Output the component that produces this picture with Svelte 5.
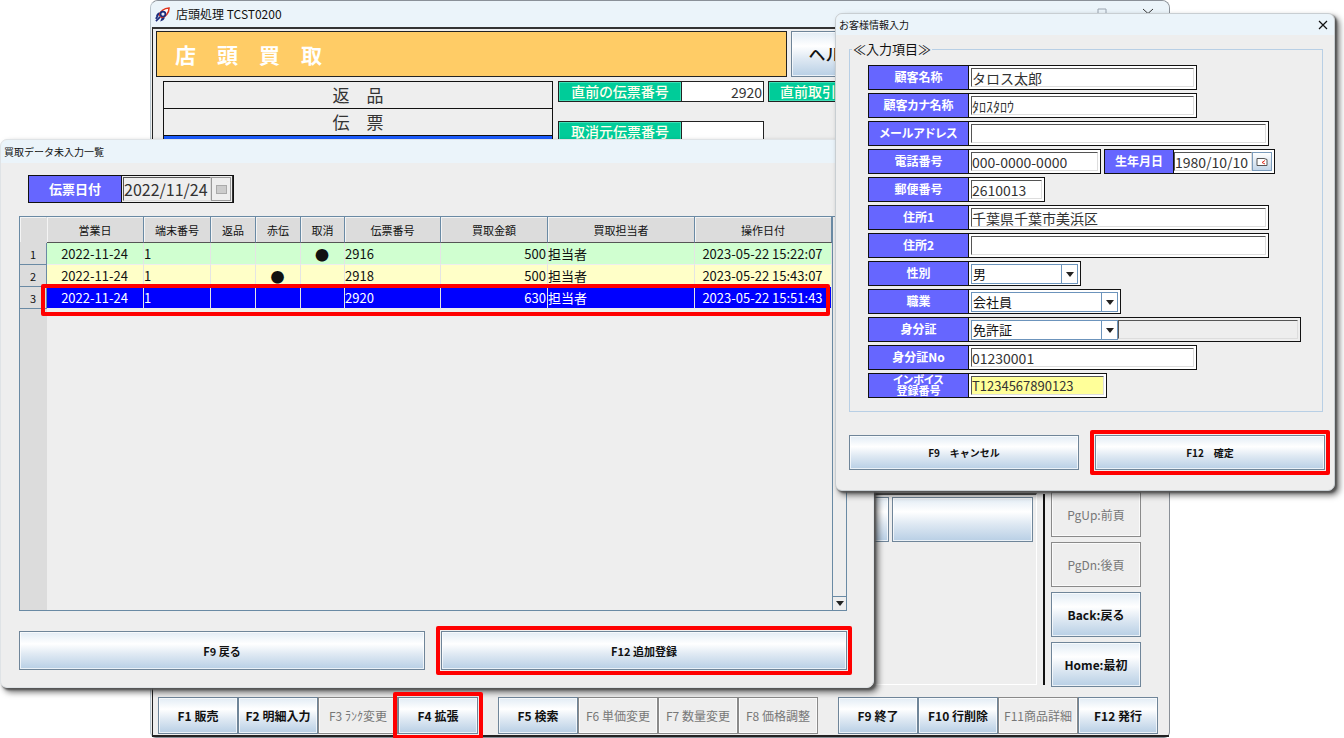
<script lang="ts">
  interface FnKey {
    label: string;
    disabled?: boolean;
    marked?: boolean;
  }

  interface Field {
    id: string;
    label: string;
    kind: 'text' | 'tel' | 'select' | 'idtype';
    value: string;
    size: string;
  }

  const fnGroups: FnKey[][] = [
    [
      { label: 'F1 販売' },
      { label: 'F2 明細入力' },
      { label: 'F3 ﾗﾝｸ変更', disabled: true },
      { label: 'F4 拡張', marked: true }
    ],
    [
      { label: 'F5 検索' },
      { label: 'F6 単価変更', disabled: true },
      { label: 'F7 数量変更', disabled: true },
      { label: 'F8 価格調整', disabled: true }
    ],
    [
      { label: 'F9 終了' },
      { label: 'F10 行削除' },
      { label: 'F11商品詳細', disabled: true },
      { label: 'F12 発行' }
    ]
  ];

  const pageKeys: FnKey[] = [
    { label: 'PgUp:前頁', disabled: true },
    { label: 'PgDn:後頁', disabled: true },
    { label: 'Back:戻る' },
    { label: 'Home:最初' }
  ];

  const columns = ['営業日', '端末番号', '返品', '赤伝', '取消', '伝票番号', '買取金額', '買取担当者', '操作日付'];

  const slips = [
    { date: '2022-11-24', term: '1', red: '', cancel: '●', no: '2916', price: 500, staff: '担当者', at: '2023-05-22 15:22:07', tone: 'green' },
    { date: '2022-11-24', term: '1', red: '●', cancel: '', no: '2918', price: 500, staff: '担当者', at: '2023-05-22 15:43:07', tone: 'yellow' },
    { date: '2022-11-24', term: '1', red: '', cancel: '', no: '2920', price: 630, staff: '担当者', at: '2023-05-22 15:51:43', tone: 'selected' }
  ];

  const fields: Field[] = [
    { id: 'name', label: '顧客名称', kind: 'text', value: 'タロス太郎', size: 'm' },
    { id: 'kana', label: '顧客カナ名称', kind: 'text', value: 'ﾀﾛｽﾀﾛｳ', size: 'm' },
    { id: 'mail', label: 'メールアドレス', kind: 'text', value: '', size: 'l' },
    { id: 'tel', label: '電話番号', kind: 'tel', value: '000-0000-0000', size: 's' },
    { id: 'zip', label: '郵便番号', kind: 'text', value: '2610013', size: 'xs' },
    { id: 'addr1', label: '住所1', kind: 'text', value: '千葉県千葉市美浜区', size: 'l' },
    { id: 'addr2', label: '住所2', kind: 'text', value: '', size: 'l' },
    { id: 'sex', label: '性別', kind: 'select', value: '男', size: 'sex' },
    { id: 'job', label: '職業', kind: 'select', value: '会社員', size: 'job' },
    { id: 'idtype', label: '身分証', kind: 'idtype', value: '免許証', size: 'xl' },
    { id: 'idno', label: '身分証No', kind: 'text', value: '01230001', size: 'm' },
    { id: 'invoice', label: 'インボイス\n登録番号', kind: 'text', value: 'T1234567890123', size: 'inv' }
  ];
</script>

<div class="desktop">
  <main class="window shop">
    <header class="titlebar">
      <svg class="rocket" viewBox="0 0 16 16" aria-hidden="true">
        <path d="M4 8 8 3.5Q11 1 15 1q0 4-2.500 7L8 12z" fill="#fff" stroke="#e0321c" stroke-width="1.6" />
        <path d="M5 5.500Q1.500 6 1 10.500L4 9zM10.500 11q-.5 3.500-5 4.500L7 12z" fill="#1c2c7c" />
        <circle cx="8.500" cy="7.500" r="2.600" fill="#e8eefc" stroke="#1c2c7c" stroke-width="1.800" />
        <path d="m5.500 10.500-4.500 4.500M3 9.500 .8 12.500" stroke="#1c2c7c" stroke-width="1.800" />
      </svg>
      <span>店頭処理 TCST0200</span>
      <svg class="controls" viewBox="0 0 60 12" aria-hidden="true">
        <path d="M1 1h8v8H1z" stroke="#9aa4b0" fill="none" />
        <path d="m46 1 10 9m0-9L46 10" stroke="#333" fill="none" />
      </svg>
    </header>

    <div class="shop-body">
      <div class="head">
        <h1>店　頭　買　取</h1>
        <button class="btn help" type="button">ヘルプ</button>
      </div>

      <div class="info">
        <ul class="kinds">
          <li>返　品</li>
          <li>伝　票</li>
          <li class="active"></li>
        </ul>
        <div class="refs">
          <div class="ref">
            <label for="last-no">直前の伝票番号</label>
            <input id="last-no" value="2920" readonly />
            <span class="ref-next">直前取引</span>
          </div>
          <div class="ref">
            <label for="cancel-no">取消元伝票番号</label>
            <input id="cancel-no" readonly />
          </div>
        </div>
      </div>

      <div class="lower">
        <div class="panel">
          <button class="btn slot" type="button"></button>
          <button class="btn slot" type="button"></button>
        </div>
        <div class="divider"></div>
        <div class="page-keys">
          {#each pageKeys as key}
            <button class="btn" type="button" disabled={key.disabled}>{key.label}</button>
          {/each}
        </div>
      </div>

      <nav class="fn-bar">
        {#each fnGroups as group}
          <div class="fn-group">
            {#each group as key}
              <button class="btn" class:marked={key.marked} type="button" disabled={key.disabled}>{key.label}</button>
            {/each}
          </div>
        {/each}
      </nav>
    </div>
  </main>

  <section class="window slips">
    <header class="titlebar small">買取データ未入力一覧</header>
    <div class="slips-body">
      <div class="date">
        <label for="slip-date">伝票日付</label>
        <div class="box">
          <input id="slip-date" value="2022/11/24" readonly />
          <button class="cal off" type="button" disabled aria-label="日付選択"><i></i></button>
        </div>
      </div>

      <div class="grid">
        <div class="sheet">
          <table>
            <colgroup>
              <col class="c-num" /><col class="c-date" /><col class="c-term" /><col class="c-flag" /><col class="c-flag" />
              <col class="c-cancel" /><col class="c-no" /><col class="c-price" /><col class="c-staff" /><col />
            </colgroup>
            <thead>
              <tr>
                <th></th>
                {#each columns as col}
                  <th>{col}</th>
                {/each}
              </tr>
            </thead>
            <tbody>
              {#each slips as slip, i}
                <tr class={slip.tone}>
                  <th>{i + 1}</th>
                  <td class="mid">{slip.date}</td>
                  <td>{slip.term}</td>
                  <td></td>
                  <td class="mid dot">{slip.red}</td>
                  <td class="mid dot">{slip.cancel}</td>
                  <td>{slip.no}</td>
                  <td class="num">{slip.price}</td>
                  <td>{slip.staff}</td>
                  <td class="mid">{slip.at}</td>
                </tr>
              {/each}
            </tbody>
          </table>
        </div>
        <div class="scroll">
          <button type="button" aria-label="下へ"><i class="arrow"></i></button>
        </div>
      </div>

      <footer class="actions">
        <button class="btn" type="button">F9 戻る</button>
        <button class="btn marked" type="button">F12 追加登録</button>
      </footer>
    </div>
  </section>

  <section class="window customer">
    <header class="titlebar small">
      <span>お客様情報入力</span>
      <button class="close" type="button" aria-label="閉じる">
        <svg viewBox="0 0 10 10" aria-hidden="true"><path d="m1 1 8 8m0-8L1 9" stroke="#111" stroke-width="1.2" /></svg>
      </button>
    </header>
    <form class="customer-body">
      <fieldset>
        <legend>≪入力項目≫</legend>
        {#each fields as f}
          <div class="row">
            <label for={f.id} class:two={f.id === 'invoice'}>{f.label}</label>
            <div class="box {f.size}">
              {#if f.kind === 'select' || f.kind === 'idtype'}
                <div class="pick">
                  <select id={f.id}><option>{f.value}</option></select>
                  <i class="arrow"></i>
                </div>
                {#if f.kind === 'idtype'}
                  <input class="extra" aria-label="身分証補足" disabled />
                {/if}
              {:else}
                <input id={f.id} value={f.value} />
              {/if}
            </div>
            {#if f.kind === 'tel'}
              <label for="birth" class="birth">生年月日</label>
              <div class="box birthday">
                <input id="birth" value="1980/10/10" />
                <button class="cal" type="button" aria-label="日付選択">
                  <svg viewBox="0 0 12 10" aria-hidden="true">
                    <path d="M1 1.5h7l3 1v6H1z" fill="#fff" stroke="#555" />
                    <path d="M9 3.5 6 5.5l3 1.5" fill="none" stroke="#e03020" />
                  </svg>
                </button>
              </div>
            {/if}
          </div>
        {/each}
      </fieldset>
      <footer class="actions">
        <button class="btn" type="button">F9　キャンセル</button>
        <button class="btn marked" type="button">F12　確定</button>
      </footer>
    </form>
  </section>
</div>

<style>
  :global(body) {
    margin: 0;
    background: #fff;
  }

  .desktop {
    position: relative;
    min-height: 100vh;
    overflow: hidden;
    font-family: "Noto Sans CJK JP", "Liberation Sans", sans-serif;
    font-size: 12px;
    line-height: 16px;
    color: #111;
  }

  .desktop * {
    box-sizing: border-box;
  }

  button,
  input,
  select {
    font: inherit;
    color: inherit;
    margin: 0;
    padding: 0;
    border-radius: 0;
    min-width: 0;
  }

  /* windows */
  .window {
    position: absolute;
    display: flex;
    flex-direction: column;
    background: #eee;
  }

  .shop {
    top: 0;
    bottom: 0;
    left: 150px;
    right: 174px;
    border: 1px solid #8a9098;
    border-left-color: #b8c4cc;
    border-radius: 8px 8px 6px 6px;
  }

  .slips {
    top: 139px;
    bottom: 50px;
    left: 0;
    right: 470px;
    border: 1px solid #dfe3e6;
    border-radius: 7px;
    box-shadow: 2px 2px 2px #555, 4px 4px 6px rgba(0, 0, 0, 0.6);
  }

  .customer {
    top: 13px;
    left: 835px;
    right: 9px;
    border: 1px solid #c8ced2;
    border-radius: 7px;
    box-shadow: 2px 2px 2px #555, 4px 4px 6px rgba(0, 0, 0, 0.6);
  }

  .titlebar {
    display: flex;
    align-items: center;
    gap: 6px;
    height: 26px;
    padding: 0 12px 0 4px;
    background: #ebf4fa;
    border-radius: 7px 7px 0 0;
  }

  .titlebar.small {
    height: 23px;
    padding: 0 6px 0 3px;
    font-size: 10px;
  }

  .customer .titlebar {
    height: 21px;
  }

  .rocket {
    width: 15px;
    height: 15px;
  }

  .controls {
    width: 60px;
    height: 12px;
    margin-left: auto;
  }

  .close {
    display: flex;
    margin-left: auto;
    border: none;
    background: none;
  }

  .close svg {
    width: 10px;
    height: 10px;
  }

  /* buttons */
  .btn {
    position: relative;
    display: block;
    border: 1px solid #6f8599;
    background: linear-gradient(#e2ecf5, #fff 32%, #dfe9f3 60%, #b8cfe5);
    box-shadow: inset 0 0 0 1px rgba(255, 255, 255, 0.7);
    font-weight: bold;
    text-align: center;
    white-space: nowrap;
  }

  .btn:disabled {
    background: #eee;
    border-color: #8a8a8a;
    color: #777;
    font-weight: normal;
  }

  .marked::after {
    content: "";
    position: absolute;
    z-index: 2;
    inset: -6px;
    border: 4px solid #f00;
    border-radius: 2px;
  }

  .arrow {
    display: block;
    border: 4px solid transparent;
    border-top: 5px solid #222;
    border-bottom: none;
  }

  /* shop window */
  .shop-body {
    flex: 1;
    display: flex;
    flex-direction: column;
    margin-left: 1px;
    padding: 2px 11px 1px 3px;
    border-top: 2px solid #333;
    border-left: 1px solid #222;
    border-bottom: 2px solid #222;
  }

  .head {
    display: flex;
    gap: 4px;
  }

  h1 {
    flex: none;
    width: 631px;
    margin: 0;
    padding: 0 18px;
    border: 1px solid #222;
    background: #fc6;
    color: #fff;
    font-size: 21px;
    line-height: 44px;
    white-space: nowrap;
  }

  .help {
    width: 86px;
    font-size: 17px;
    font-weight: 500;
  }

  .info {
    display: flex;
    gap: 5px;
    margin: 4px 0 0 7px;
  }

  .kinds {
    flex: none;
    width: 390px;
    margin: 0;
    padding: 0;
    list-style: none;
    border: 1px solid #111;
    font-size: 17px;
    line-height: 26px;
    text-align: center;
    color: #333;
  }

  .kinds li {
    height: 27px;
    border-bottom: 1px solid #111;
  }

  .kinds .active {
    background: #1a5cff;
  }

  .refs {
    display: grid;
    gap: 19px;
    align-content: start;
    font-size: 14px;
  }

  .ref {
    display: flex;
    height: 21px;
  }

  .ref label,
  .ref-next {
    width: 124px;
    border: 1px solid #222;
    box-shadow: inset 0 0 0 1px #3fe0b8;
    background: #0c9;
    color: #ffe;
    line-height: 18px;
    font-weight: 500;
    text-align: center;
  }

  .ref-next {
    width: 80px;
    margin-left: 4px;
  }

  .ref input {
    width: 82px;
    padding: 0 1px;
    border: 1px solid #222;
    border-left: none;
    background: #fff;
    text-align: right;
    color: #333;
  }

  .lower {
    display: flex;
    gap: 6px;
    margin: auto 17px 0 7px;
  }

  .panel {
    flex: 1;
    display: flex;
    justify-content: flex-end;
    align-items: flex-start;
    gap: 3px;
    margin: 1px 0 2px;
    padding: 2px 3px;
    border: 1px solid #fff;
    border-top: 2px solid #555;
  }

  .slot {
    width: 141px;
    height: 45px;
  }

  .divider {
    width: 2px;
    margin: 2px 0;
    background: #111;
  }

  .page-keys {
    display: grid;
    gap: 5px;
    width: 90px;
  }

  .page-keys .btn {
    height: 45px;
  }

  .fn-bar {
    display: flex;
    gap: 20px;
    margin: 10px 0 0 2px;
  }

  .fn-group {
    flex: 1;
    display: flex;
  }

  .fn-group .btn {
    flex: 1;
    height: 37px;
  }

  /* slip list */
  .slips-body {
    flex: 1;
    display: flex;
    flex-direction: column;
    padding: 12px 26px 17px 18px;
  }

  label {
    background: #66f;
    color: #fff;
    font-weight: bold;
    text-align: center;
    white-space: pre-line;
    font-feature-settings: "palt";
  }

  .date {
    display: flex;
    width: 206px;
    height: 28px;
    margin: 0 0 13px 9px;
    border: 1px solid #111;
  }

  .date label {
    flex: none;
    width: 93px;
    border-right: 1px solid #111;
    font-size: 13px;
    line-height: 26px;
  }

  .date .box {
    flex: 1;
    min-width: 0;
    padding: 1px;
    border: none;
    border-right: 1px solid #333;
    background: #eee;
    font-size: 16px;
  }

  .date .box input {
    background: #eee;
  }

  .cal {
    flex: none;
    display: grid;
    place-items: center;
    width: 20px;
    border: 1px solid #7c9cbc;
    background: linear-gradient(#fff, #c4d6e8);
  }

  .cal svg {
    width: 12px;
    height: 10px;
  }

  .cal.off {
    border-color: #999;
    background: #eee;
  }

  .cal.off i {
    width: 11px;
    height: 9px;
    border: 1px solid #aaa;
    background: #ccc;
  }

  .grid {
    flex: 1;
    display: flex;
    border: 1px solid #6a8aa4;
    font-size: 13px;
  }

  .sheet {
    flex: 1;
    background: linear-gradient(90deg, #dcdcdc 27px, #eee 27px);
  }

  table {
    width: 100%;
    table-layout: fixed;
    border-collapse: separate;
    border-spacing: 0;
  }

  .c-num { width: 27px; }
  .c-date { width: 97px; }
  .c-term { width: 67px; }
  .c-flag { width: 45px; }
  .c-cancel { width: 44px; }
  .c-no { width: 96px; }
  .c-price { width: 107px; }
  .c-staff { width: 147px; }

  th {
    padding: 0;
    background: #dcdcdc;
    font-size: 11px;
    font-weight: normal;
  }

  thead th {
    height: 26px;
    border-right: 1px solid #6a8aa4;
    border-bottom: 1px solid #555;
    box-shadow: inset 1px 1px 0 #f4f4f4;
  }

  thead th:first-child {
    border-color: #dcdcdc;
  }

  tbody th {
    border-bottom: 1px solid #6a8aa4;
    border-right: 1px solid #6a8aa4;
  }

  td {
    height: 22px;
    padding: 0 1px 0 0;
    border-right: 1px solid #e4e4e4;
    border-bottom: 1px solid #eee;
    line-height: 20px;
    white-space: nowrap;
  }

  .mid {
    text-align: center;
  }

  .num {
    text-align: right;
  }

  .dot {
    font-size: 14px;
  }

  .green td {
    background: #d0ffd0;
  }

  .yellow td {
    background: #ffffc8;
  }

  .selected {
    position: relative;
  }

  .selected td {
    background: #00f;
    color: #fff;
  }

  /* frame spans the whole row, the row is its containing block */
  .selected th::after {
    content: "";
    position: absolute;
    z-index: 1;
    inset: -3px 2px -7px 21px;
    border: 4px solid #f00;
    border-radius: 2px;
  }

  .scroll {
    display: flex;
    align-items: flex-end;
    width: 14px;
    border-left: 1px solid #6a8aa4;
  }

  .scroll button {
    display: grid;
    place-items: center;
    width: 100%;
    height: 14px;
    border: none;
    border-top: 1px solid #6a8aa4;
    background: #eee;
  }

  .actions {
    display: grid;
    grid-template-columns: 1fr 1fr;
    gap: 16px;
    margin-top: 20px;
    font-size: 11px;
  }

  .actions .btn {
    height: 39px;
  }

  /* customer form */
  .customer-body {
    padding: 6px 9px 20px 13px;
  }

  fieldset {
    display: grid;
    gap: 3px;
    min-width: 0;
    margin: 0 2px 0 0;
    padding: 8px 0 13px 18px;
    border: 1px solid #b8cfe5;
  }

  legend {
    margin-left: -16px;
    padding: 0 1px;
    font-size: 13px;
    font-feature-settings: "palt";
  }

  .row {
    display: flex;
    height: 25px;
  }

  .row label {
    width: 101px;
    border: 1px solid #111;
    line-height: 22px;
  }

  .row label.two {
    font-size: 11px;
    line-height: 11px;
  }

  .row label.birth {
    width: 70px;
    margin-left: 3px;
  }

  .box {
    display: flex;
    padding: 2px;
    border: 1px solid #111;
    border-left: none;
    background: #fff;
    font-size: 14px;
  }

  .box.xs { width: 76px; }
  .box.s { width: 132px; }
  .box.m { width: 228px; }
  .box.l { width: 300px; }
  .box.xl { width: 332px; background: #eee; }
  .box.sex { width: 112px; }
  .box.job { width: 152px; }
  .box.inv { width: 138px; font-size: 13px; }

  .box.birthday {
    width: 101px;
    padding-left: 0;
  }

  .box input {
    flex: 1;
    border: 1px solid #ddd;
    border-top-color: #555;
    border-left-color: #555;
    background: #fff;
    color: #333;
  }

  .box.inv input {
    background: #ff9;
  }

  .pick {
    position: relative;
    flex: 1;
  }

  .xl .pick {
    flex: none;
    width: 147px;
  }

  .pick select {
    appearance: none;
    display: block;
    width: 100%;
    height: 20px;
    padding-left: 1px;
    border: 1px solid #6c94bc;
    background: linear-gradient(270deg, #fff 15px, #6c94bc 15px, #6c94bc 16px, #fff 16px);
    font-size: 13px;
    line-height: 18px;
  }

  .pick .arrow {
    position: absolute;
    right: 4px;
    top: 8px;
    pointer-events: none;
  }

  .box .extra {
    background: #eee;
  }

  .customer .actions {
    margin-top: 23px;
    font-size: 10px;
  }

  .customer .actions .btn {
    height: 35px;
  }
</style>
